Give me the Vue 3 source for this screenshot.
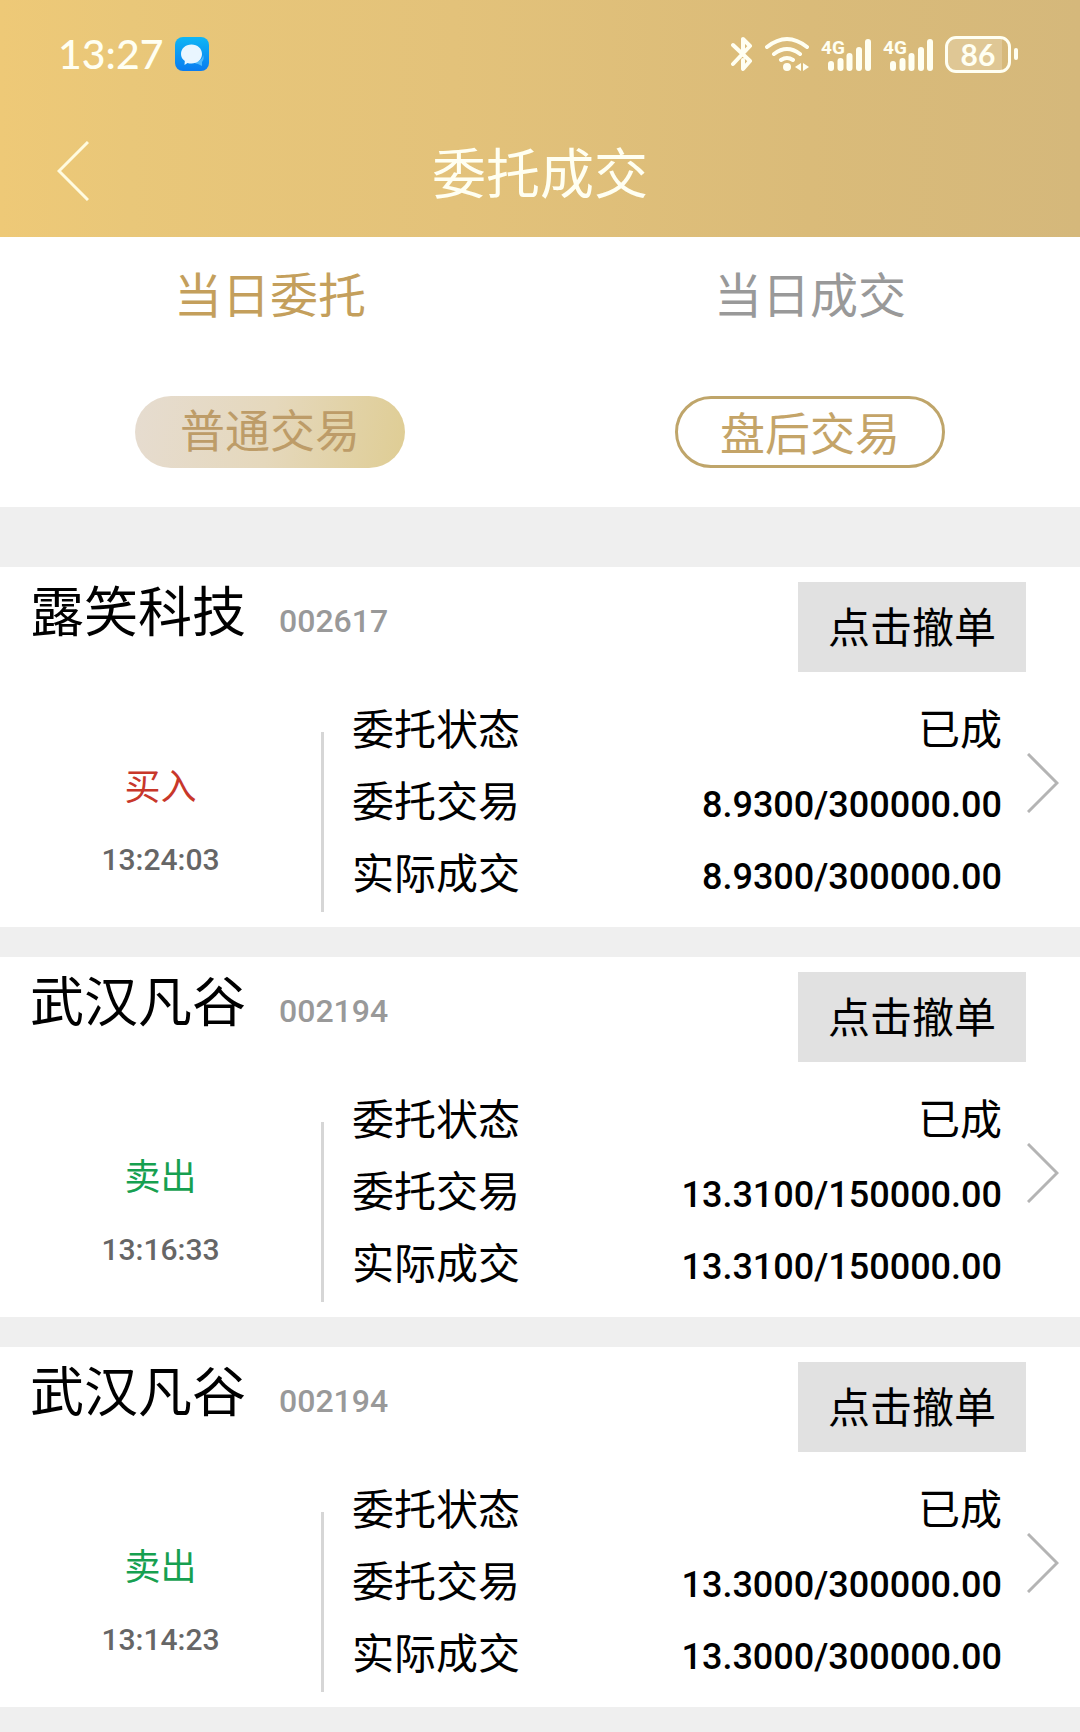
<script setup>
import { ref } from 'vue'

const tabs = ['当日委托', '当日成交']
const activeTab = ref(0)
const modes = ['普通交易', '盘后交易']
const activeMode = ref(0)

const orders = [
  { name: '露笑科技', code: '002617', side: 'buy', time: '13:24:03', status: '已成', order: '8.9300/300000.00', deal: '8.9300/300000.00' },
  { name: '武汉凡谷', code: '002194', side: 'sell', time: '13:16:33', status: '已成', order: '13.3100/150000.00', deal: '13.3100/150000.00' },
  { name: '武汉凡谷', code: '002194', side: 'sell', time: '13:14:23', status: '已成', order: '13.3000/300000.00', deal: '13.3000/300000.00' },
]
</script>

<template>
  <div class="page">
    <header class="top">
      <div class="status">
        <span class="clock">13:27</span>
        <svg class="app" viewBox="0 0 34 34" aria-hidden="true">
          <defs>
            <linearGradient id="app-bg" x1="0" y1="0" x2="0" y2="1">
              <stop offset="0" stop-color="#0fb6f5" />
              <stop offset="1" stop-color="#0a7cf0" />
            </linearGradient>
          </defs>
          <rect width="34" height="34" rx="8" fill="url(#app-bg)" />
          <path d="M19 25c5 0 9-3 9-7 1 2 1 5-1 7v4l-4-2c-2 0-3-1-4-2z" fill="#4fb9fb" />
          <path d="M16.500 7.500c6 0 10.500 4 10.500 9.500s-4.500 9.500-10.500 9.500c-1.500 0-3-.2-4-.6l-3 2 .3-4C7.300 22.200 6 20 6 17c0-5.500 4.500-9.500 10.500-9.500z" fill="#e9f6ff" />
        </svg>
        <div class="indicators">
          <svg width="22" height="36" viewBox="0 0 22 36" fill="none" stroke="#fffff2" stroke-width="4" stroke-linejoin="round" stroke-linecap="round" aria-hidden="true">
            <path d="M2 9l17 16-7 8V24M2 28l17-18-7-7v13" />
          </svg>
          <svg width="44" height="36" viewBox="0 0 44 36" fill="none" stroke="#fffff2" stroke-width="4" stroke-linecap="round" aria-hidden="true">
            <path d="M2 11Q22-5 42 11M9 18q13-10 26 0M16 24q6-4 12 0" />
            <circle cx="22" cy="31" r="4" fill="#fffff2" stroke="none" />
            <path d="M36 27v8l-6-4zM38 27v8l6-4z" fill="#fffff2" stroke="none" />
          </svg>
          <svg v-for="n in 2" :key="n" width="50" height="36" viewBox="0 0 50 36" aria-hidden="true">
            <text class="net" x="0" y="18">4G</text>
            <path d="M10 28v4M19.500 25v7M28.500 20v12M38 14v18M47 6v26" fill="none" stroke="#fffff2" stroke-width="6" stroke-linecap="round" />
          </svg>
          <span class="battery"><span class="level">86</span></span>
        </div>
      </div>
      <div class="nav">
        <button class="back" type="button" aria-label="返回">
          <svg width="32" height="60" viewBox="0 0 32 60" fill="none" stroke="#fffbe0" stroke-width="3" aria-hidden="true">
            <path d="M31 1L2 30l29 29" />
          </svg>
        </button>
        <h1>委托成交</h1>
      </div>
    </header>

    <section class="filters">
      <div class="tabs">
        <button v-for="(t, i) in tabs" :key="t" type="button" :class="['tab', { active: activeTab === i }]" @click="activeTab = i">{{ t }}</button>
      </div>
      <div class="modes">
        <button v-for="(m, i) in modes" :key="m" type="button" :class="['mode', { active: activeMode === i }]" @click="activeMode = i">{{ m }}</button>
      </div>
    </section>

    <main class="list">
      <article v-for="(o, i) in orders" :key="i" class="card">
        <div class="head">
          <div class="stock">
            <h2>{{ o.name }}</h2>
            <span class="code">{{ o.code }}</span>
          </div>
          <button class="cancel" type="button">点击撤单</button>
        </div>
        <div class="body">
          <div class="when">
            <span :class="o.side">{{ o.side === 'buy' ? '买入' : '卖出' }}</span>
            <time>{{ o.time }}</time>
          </div>
          <dl>
            <div><dt>委托状态</dt><dd>{{ o.status }}</dd></div>
            <div><dt>委托交易</dt><dd class="num">{{ o.order }}</dd></div>
            <div><dt>实际成交</dt><dd class="num">{{ o.deal }}</dd></div>
          </dl>
          <svg class="more" width="32" height="60" viewBox="0 0 32 60" fill="none" stroke="#b4b4b4" stroke-width="3" aria-hidden="true">
            <path d="M1 1l29 29L1 59" />
          </svg>
        </div>
      </article>
    </main>
  </div>
</template>

<style>
body {
  margin: 0;
  background: #efefef;
}
</style>

<style scoped>
.page {
  font-family: "Noto Sans CJK SC", sans-serif;
  color: #000;
}
button {
  border: 0;
  padding: 0;
  background: none;
  font: inherit;
  color: inherit;
}
h1, h2, dl, dd {
  margin: 0;
  font-weight: 400;
}
.top {
  background: linear-gradient(90deg, #eec977 0, #e9c779 12%, #e3c27a 42%, #dabb79 75%, #d5b87b 100%);
  color: #fffff2;
}
.status {
  display: flex;
  align-items: center;
  height: 108px;
  padding: 0 62px 0 58px;
}
.clock {
  font: 500 41px/60px Lato, sans-serif;
}
.app {
  width: 34px;
  height: 34px;
  margin-left: 12px;
}
.indicators {
  display: flex;
  align-items: center;
  gap: 12px;
  margin-left: auto;
}
.net {
  font: 700 19px Roboto, sans-serif;
  fill: #fffff2;
}
.battery {
  display: flex;
  align-items: center;
  gap: 3px;
}
.battery::after {
  content: "";
  width: 4px;
  height: 12px;
  border-radius: 2px;
  background: #fffff2;
}
.level {
  box-sizing: border-box;
  width: 66px;
  height: 37px;
  border: 3px solid #fffff2;
  border-radius: 11px;
  background: linear-gradient(90deg, #dfc795 54px, transparent 54px);
  font: 700 30px/31px Lato, sans-serif;
  text-align: center;
}
.nav {
  box-sizing: border-box;
  display: grid;
  grid-template-columns: 1fr auto 1fr;
  align-items: center;
  height: 129px;
  padding-bottom: 4px;
}
.back {
  justify-self: start;
  margin-left: 57px;
  height: 60px;
}
.back svg {
  display: block;
}
h1 {
  font-size: 54px;
  line-height: 72px;
}
.filters {
  background: #fff;
  padding: 19px 0 39px;
}
.tabs, .modes {
  display: grid;
  grid-template-columns: 1fr 1fr;
  justify-items: center;
}
.tab {
  font-size: 48px;
  line-height: 72px;
  color: #999;
}
.tab.active {
  color: #c49f5c;
}
.modes {
  margin-top: 68px;
}
.mode {
  box-sizing: border-box;
  width: 50%;
  height: 72px;
  border: 3px solid #bfa56a;
  border-radius: 36px;
  font-size: 45px;
  line-height: 66px;
  color: #c4a468;
}
.mode.active {
  border: 0;
  padding-bottom: 6px;
  background: linear-gradient(100deg, #e6dcd0, #e5d8bc 50%, #dfcd94);
  color: #bd9c68;
}
.list {
  display: flex;
  flex-direction: column;
  gap: 30px;
  padding: 60px 0 25px;
}
.card {
  background: #fff;
  padding: 15px 0;
}
.head {
  display: flex;
  justify-content: space-between;
  align-items: flex-start;
  padding: 0 54px 0 30px;
}
.stock {
  display: flex;
  align-items: baseline;
  gap: 33px;
}
h2 {
  font-size: 54px;
  line-height: 54px;
}
.code, time, .num {
  font-family: Roboto, sans-serif;
  font-weight: 500;
}
.code {
  font-size: 32px;
  color: #999;
}
.cancel {
  width: 228px;
  height: 90px;
  padding-bottom: 5px;
  background: #e1e1e1;
  font-size: 42px;
}
.body {
  display: flex;
  height: 221px;
  margin-top: 19px;
}
.when {
  box-sizing: border-box;
  width: 30%;
  height: 180px;
  align-self: flex-end;
  border-right: 3px solid #d6d6d6;
  display: flex;
  flex-direction: column;
  justify-content: center;
  align-items: center;
  font-size: 36px;
  line-height: 72px;
}
.buy {
  color: #c8372a;
}
.sell {
  color: #16a050;
}
time {
  padding-top: 4px;
  font-size: 30px;
  color: #666;
}
dl {
  flex: 1;
  margin-left: 28px;
  font-size: 42px;
  line-height: 72px;
}
dl div {
  display: flex;
  justify-content: space-between;
  align-items: baseline;
  height: 72px;
}
.num {
  font-size: 36px;
}
.more {
  margin: 62px 21px 0 25px;
}
</style>
